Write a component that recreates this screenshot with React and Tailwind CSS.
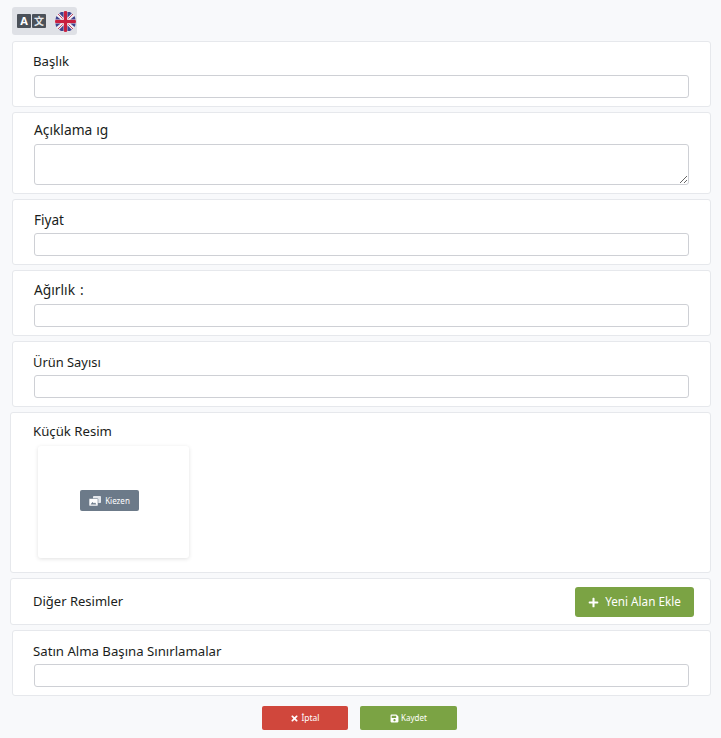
import { FaPlus, FaTimes, FaSave } from 'react-icons/fa';

const fontStack = "font-['Noto_Sans','Open_Sans',sans-serif]";

// Small union jack badge
const FlagUk = () => (
  <svg width="21" height="21" viewBox="0 0 22 22">
    <defs>
      <clipPath id="flagClip">
        <circle cx="11" cy="11" r="11" />
      </clipPath>
    </defs>
    <g clipPath="url(#flagClip)">
      <rect width="22" height="22" fill="#f1eef3" />
      <path d="M3 1 L9 1 L9 7 Z M13 1 L19 1 L13 7 Z M0 4 L6 9 L0 9 Z M22 4 L16 9 L22 9 Z M0 18 L6 13 L0 13 Z M22 18 L16 13 L22 13 Z M3 21 L9 21 L9 15 Z M19 21 L13 21 L13 15 Z" fill="#3f4590" />
      <path d="M2 2 L8 8 M20 2 L14 8 M2 20 L8 14 M20 20 L14 14" stroke="#c2415c" strokeWidth="1" />
      <rect x="9.3" width="3.4" height="22" fill="#c8203f" />
      <rect y="9.3" width="22" height="3.4" fill="#c8203f" />
    </g>
  </svg>
);

const TranslateIcon = () => (
  <div className="flex gap-[1px]">
    <span className="w-[14px] h-[14px] bg-[#4b5159] text-white text-[11px] font-bold leading-[14px] text-center rounded-[1px]">A</span>
    <span className="w-[14px] h-[14px] bg-[#4b5159] text-[#e5e7ea] text-[10px] font-bold leading-[14px] text-center rounded-[1px] font-['Noto_Sans_CJK_SC',sans-serif]">文</span>
  </div>
);

// Two overlapping picture panes on the choose button
const PicturesIcon = () => (
  <svg width="12" height="10" viewBox="0 0 12 10">
    <rect x="4" y="0" width="8" height="7" rx="0.8" fill="#e3e7ec" />
    <rect x="0" y="2.5" width="9" height="7.5" rx="0.8" fill="#ffffff" stroke="#6c7a89" strokeWidth="0.6" />
    <path d="M1.5 8.5 L3.5 6 L5 7.5 L6 6.5 L7.5 8.5 Z" fill="#6c7a89" />
  </svg>
);

const Card = ({ className = '', children }) => (
  <div className={`bg-white border border-[#e6e8ec] rounded-[3px] ${className}`}>{children}</div>
);

const TextField = ({ label, labelClass = 'text-[13.2px]' }) => (
  <Card className="ml-[12px] mr-[10px] h-[66px] pt-[9px] pl-[21px] pr-[21px]">
    <div className={`leading-[20px] text-[#1a1d20] h-[20px] ${labelClass}`}>{label}</div>
    <input className="block w-full h-[23px] mt-[4px] bg-white border border-[#ced0d5] rounded-[3px]" />
  </Card>
);

export default function App() {
  return (
    <div className={`w-[721px] h-[738px] overflow-hidden bg-[#f8f9fb] pt-[7px] ${fontStack}`}>
      {/* Language switch */}
      <div className="ml-[12px] w-[65px] h-[28px] bg-[#dfe1e6] rounded-[3px] flex items-center pl-[5px] gap-[9px]">
        <TranslateIcon />
        <FlagUk />
      </div>

      <div className="mt-[6px] flex flex-col gap-[5px]">
        <TextField label="Başlık" labelClass="text-[13.2px] -ml-[1px]" />

        <Card className="ml-[12px] mr-[10px] h-[82px] pt-[7px] pl-[21px] pr-[21px]">
          <div className="text-[13.8px] leading-[20px] text-[#1a1d20] h-[20px]">
            Açıklama<span className="ml-[4px]">ıg</span>
          </div>
          <textarea className="block w-full h-[41px] mt-[4px] bg-white border border-[#ced0d5] rounded-[3px]" />
        </Card>

        <TextField label="Fiyat" labelClass="text-[13.6px] pt-[1px]" />
        <TextField label={<>Ağırlık<span className="ml-[5px]">:</span></>} labelClass="text-[13.8px]" />
        <TextField label="Ürün Sayısı" labelClass="text-[12.9px] -ml-[1px] pt-[1px]" />

        {/* Thumbnail */}
        <Card className="ml-[10px] mr-[10px] h-[161px] pt-[8px] pl-[22px]">
          <div className="text-[13.2px] leading-[20px] text-[#1a1d20]">Küçük Resim</div>
          <div className="ml-[5px] mt-[5px] w-[151px] h-[112px] bg-white rounded-[3px] shadow-[0_1px_4px_rgba(0,0,0,0.12)] pl-[42px] pt-[44px]">
            <button className="w-[59px] h-[21px] bg-[#6c7a89] rounded-[2px] text-white text-[8px] flex items-center justify-center gap-[4px]">
              <PicturesIcon />
              Kiezen
            </button>
          </div>
        </Card>

        {/* Other images */}
        <Card className="ml-[10px] mr-[10px] h-[47px] pl-[22px] pr-[16px] flex items-center justify-between">
          <div className="text-[13px] text-[#1a1d20] pt-[1px]">Diğer Resimler</div>
          <button className="w-[119px] h-[30px] pt-[1px] bg-[#7ba344] rounded-[3px] text-white text-[11.7px] flex items-center justify-center gap-[6px]">
            <FaPlus className="text-[11px]" />
            Yeni Alan Ekle
          </button>
        </Card>

        <TextField label="Satın Alma Başına Sınırlamalar" labelClass="text-[13.2px] -ml-[1px] pt-[1px]" />
      </div>

      {/* Actions */}
      <div className="mt-[10px] ml-[262px] flex gap-[12px]">
        <button className="w-[86px] h-[24px] bg-[#d0473c] rounded-[2px] text-white text-[8.5px] flex items-center justify-center gap-[2px]">
          <FaTimes className="text-[9px]" />
          İptal
        </button>
        <button className="w-[97px] h-[24px] bg-[#7ba344] rounded-[2px] text-white text-[8px] flex items-center justify-center gap-[2px]">
          <FaSave className="text-[9px]" />
          Kaydet
        </button>
      </div>
    </div>
  );
}
